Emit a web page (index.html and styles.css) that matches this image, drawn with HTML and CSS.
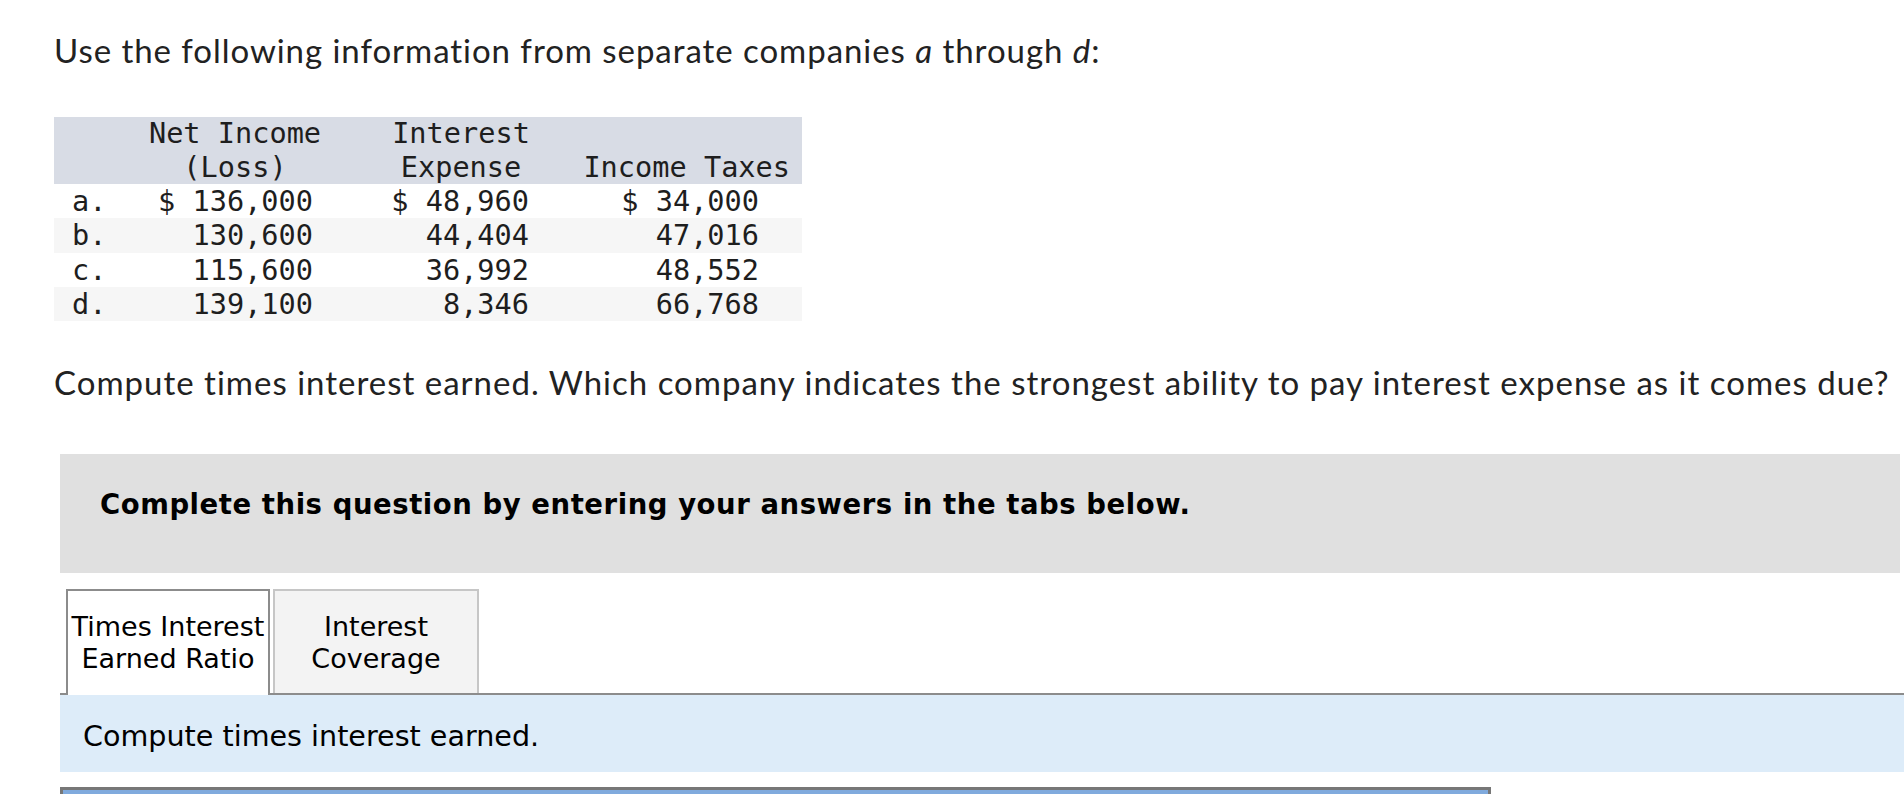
FILE: index.html
```html
<!DOCTYPE html>
<html lang="en">
<head>
<meta charset="utf-8">
<title>Times interest earned</title>
<link rel="stylesheet" href="styles.css">
</head>
<body>
<div class="page">
  <p class="lead">Use the following information from separate companies <i>a</i> through <i>d</i>:</p>

  <table class="data">
    <thead>
      <tr>
        <th class="c0"></th>
        <th class="c1">Net Income<br>(Loss)</th>
        <th class="c2">Interest<br>Expense</th>
        <th class="c3">Income Taxes</th>
      </tr>
    </thead>
    <tbody>
      <tr><td class="c0">a.</td><td class="c1">$ 136,000</td><td class="c2">$ 48,960</td><td class="c3">$ 34,000</td></tr>
      <tr class="alt"><td class="c0">b.</td><td class="c1">130,600</td><td class="c2">44,404</td><td class="c3">47,016</td></tr>
      <tr><td class="c0">c.</td><td class="c1">115,600</td><td class="c2">36,992</td><td class="c3">48,552</td></tr>
      <tr class="alt"><td class="c0">d.</td><td class="c1">139,100</td><td class="c2">8,346</td><td class="c3">66,768</td></tr>
    </tbody>
  </table>

  <p class="question">Compute times interest earned. Which company indicates the strongest ability to pay interest expense as it comes due?</p>

  <div class="qbox">
    <div class="banner">Complete this question by entering your answers in the tabs below.</div>

    <div class="tabs">
      <div class="tab active">Times Interest<br>Earned Ratio</div>
      <div class="tab">Interest<br>Coverage</div>
    </div>

    <div class="panel">Compute times interest earned.</div>

    <div class="answer"></div>
  </div>
</div>
</body>
</html>
```

FILE: styles.css
```css
html, body {
  margin: 0;
  padding: 0;
  background: #ffffff;
}

body {
  overflow: hidden;
}

.page {
  padding: 30px 0 0 54px;
  font-family: Lato, "Liberation Sans", sans-serif;
  color: #222222;
}

.lead {
  margin: 0;
  font-size: 33px;
  line-height: 40px;
  letter-spacing: 0.95px;
}

.lead i {
  font-style: italic;
}

.data {
  margin-top: 47px;
  border-collapse: collapse;
  border-spacing: 0;
  width: 748px;
  table-layout: fixed;
  font-family: "DejaVu Sans Mono", "Liberation Mono", monospace;
  font-size: 28.6px;
  color: #1e1e1e;
}

.data th,
.data td {
  box-sizing: border-box;
  padding: 0;
  font-weight: normal;
  white-space: nowrap;
}

.data thead tr {
  background: #d8dce5;
}

.data th {
  line-height: 33.5px;
  vertical-align: bottom;
  text-align: center;
}

.data td {
  line-height: 34.25px;
  text-align: right;
}

.data .alt {
  background: #f6f6f6;
}

.data .c0 { width: 86px; }
.data .c1 { width: 190px; }
.data .c2 { width: 252px; }
.data .c3 { width: 220px; }

.data td.c0 {
  text-align: left;
  padding-left: 18px;
}

.data td.c1 { padding-right: 17px; }
.data td.c2 { padding-right: 53px; }
.data td.c3 { padding-right: 43px; }

.data th.c2 {
  padding-left: 10px;
}

.data th.c3 {
  text-align: right;
  padding-right: 12px;
}

.question {
  margin: 41px 0 0 0;
  font-size: 33px;
  line-height: 40px;
  letter-spacing: 1px;
  white-space: nowrap;
}

.qbox {
  margin: 52px 0 0 6px;
  width: 1840px;
  font-family: "DejaVu Sans", Verdana, sans-serif;
  color: #000000;
}

.banner {
  box-sizing: border-box;
  height: 119px;
  padding: 34px 0 0 40px;
  background: #e0e0e0;
  font-size: 27.5px;
  font-weight: bold;
  letter-spacing: 0.55px;
  line-height: 32px;
}

.tabs {
  display: flex;
  gap: 3px;
  margin: 16px 0 0 6px;
  align-items: flex-end;
}

.tab {
  box-sizing: border-box;
  height: 104px;
  display: flex;
  align-items: center;
  justify-content: center;
  text-align: center;
  font-size: 27px;
  line-height: 32px;
  border: 2px solid #c6c6c6;
  border-bottom: 0;
  background: #f3f3f3;
  width: 206px;
  padding-top: 1px;
}

.tab.active {
  position: relative;
  z-index: 1;
  width: 204px;
  height: 106px;
  margin-bottom: -2px;
  padding-bottom: 2px;
  background: #ffffff;
  border-color: #8c8c8c;
}

.panel {
  box-sizing: border-box;
  height: 79px;
  margin-right: -4px;
  border-top: 2px solid #8c8c8c;
  background: #ddecf9;
  padding: 25px 0 0 23px;
  font-size: 28.6px;
  line-height: 33px;
}

.answer {
  margin-top: 15px;
  width: 1431px;
  height: 40px;
  box-sizing: border-box;
  border: 3px solid #777777;
  background: #80aadd;
}
```
